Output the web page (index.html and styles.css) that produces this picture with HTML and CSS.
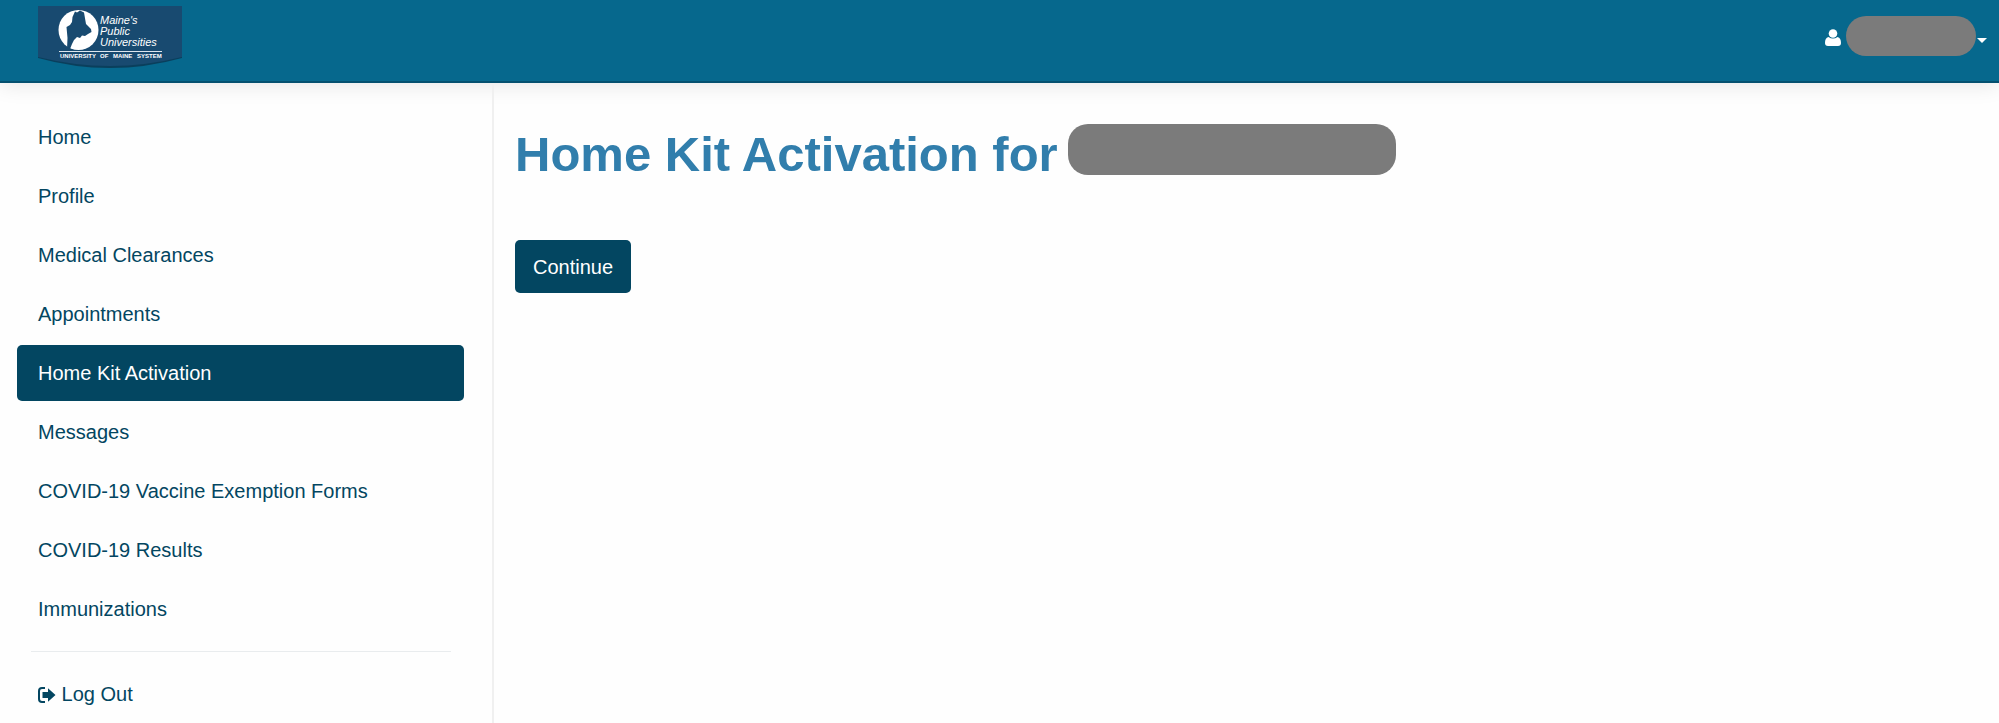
FILE: index.html
```html
<!DOCTYPE html>
<html lang="en">

<head>
    <meta charset="UTF-8">
    <meta name="viewport" content="width=device-width, initial-scale=1.0">
    <title>Home Kit Activation</title>
    <link rel="stylesheet" href="styles.css">
</head>

<body>
    <header class="navbar">
        <a class="brand" href="#" aria-label="University of Maine System">
            <svg class="logo" width="144" height="62" viewBox="0 0 144 62">
                <path class="logo-shadow" d="M0 52 Q72 72 144 52 V50 H0z"/>
                <path class="logo-bg" d="M0 0H144V51Q72 69 0 51z"/>
                <circle class="logo-fg" cx="40.5" cy="24" r="20"/>
                <path class="logo-bg" d="M29 43 L29.500 32 28.500 21 32 19 34 16 34.500 11 37 5.500 39 6.500 42 4.500 46 6.500 48 18 50 20 53 23 53.500 26 50 28 47 30 44 29.500 42 32 39 31 36 34 34 38 32 43z"/>
                <g class="logo-name">
                    <text x="62" y="18">Maine's</text>
                    <text x="62" y="29">Public</text>
                    <text x="62" y="40">Universities</text>
                </g>
                <path class="logo-line" d="M21 45.5H124"/>
                <text class="logo-system" y="52"><tspan x="22">UNIVERSITY</tspan> <tspan x="62">OF</tspan> <tspan x="75">MAINE</tspan> <tspan x="99">SYSTEM</tspan></text>
            </svg>
        </a>
        <button class="user-menu" type="button" aria-label="User menu">
            <svg class="user-icon" width="16" height="18" viewBox="0 0 16 18">
                <path d="M3.5 8C1 8.500 0 10.500 0 14Q0 17 3 17H13Q16 17 16 14C16 10.500 15 8.500 12.500 8Q8 11 3.500 8z"/>
                <circle cx="8" cy="4.500" r="4.300"/>
            </svg>
            <span class="user-name"></span>
            <span class="caret"></span>
        </button>
    </header>

    <div class="page">
        <nav class="sidebar">
            <a href="#">Home</a>
            <a href="#">Profile</a>
            <a href="#">Medical Clearances</a>
            <a href="#">Appointments</a>
            <a class="active" href="#">Home Kit Activation</a>
            <a href="#">Messages</a>
            <a href="#">COVID-19 Vaccine Exemption Forms</a>
            <a href="#">COVID-19 Results</a>
            <a href="#">Immunizations</a>
            <hr>
            <a href="#">
                <svg class="logout-icon" width="18" height="16" viewBox="0 0 18 16">
                    <path class="door" d="M7 1H4Q1 1 1 4V12Q1 15 4 15H7"/>
                    <path d="M4.500 5H10V1.200L17.500 8 10 14.800V11H4.500z"/>
                </svg>
                Log Out
            </a>
        </nav>

        <main class="content">
            <h1>Home Kit Activation for <span class="patient-name"></span></h1>
            <button class="btn" type="button">Continue</button>
        </main>
    </div>
</body>

</html>
```

FILE: styles.css
```css
* {
    box-sizing: border-box;
}

body {
    display: flex;
    flex-direction: column;
    min-height: 100vh;
    margin: 0;
    font-family: "Helvetica Neue", "Liberation Sans", Arial, sans-serif;
    font-size: 20px;
    line-height: 28px;
    color: #034661;
    background-color: #fefefe;
}

.navbar {
    display: flex;
    justify-content: space-between;
    height: 83px;
    padding: 6px 12px 0 38px;
    background-color: #06688d;
    border-bottom: 2px solid #04506f;
    box-shadow: 0 2px 20px rgba(0, 0, 0, 0.1);
}

.logo {
    display: block;
}

.logo-bg {
    fill: #184a70;
}

.logo-shadow {
    fill: #0a3f5c;
}

.logo-fg,
.logo-name,
.logo-system {
    fill: #fff;
}

.logo-name {
    font-size: 11px;
    font-style: italic;
}

.logo-system {
    font-size: 6px;
    font-weight: bold;
}

.logo-line {
    stroke: #dde6ee;
}

.user-menu {
    display: flex;
    align-items: center;
    height: 40px;
    margin-top: 10px;
    padding: 0;
    border: none;
    background: none;
    cursor: pointer;
}

.user-icon {
    fill: #fff;
    margin: 4px 5px 0 0;
}

.user-name {
    width: 130px;
    height: 40px;
    border-radius: 20px;
    background-color: #7b7b7b;
}

.caret {
    margin: 8px 0 0 1px;
    border-top: 5px solid #fff;
    border-left: 5px solid transparent;
    border-right: 5px solid transparent;
}

.page {
    display: flex;
    flex: 1;
}

.sidebar {
    display: flex;
    flex-direction: column;
    gap: 3px;
    width: 494px;
    padding: 26px 28px 0 17px;
    border-right: 2px solid #f0f0f0;
}

.sidebar a {
    padding: 14px 21px;
    border-radius: 5px;
    color: #034661;
    text-decoration: none;
}

.sidebar .active {
    color: #fff;
    background-color: #034661;
}

.sidebar hr {
    width: 420px;
    margin: 11px 14px;
    border: none;
    border-top: 1px solid #e9ecee;
}

.logout-icon {
    fill: #034661;
    vertical-align: -2px;
}

.logout-icon .door {
    fill: none;
    stroke: #034661;
    stroke-width: 2;
}

.content {
    flex: 1;
    padding: 41px 21px;
}

h1 {
    display: flex;
    align-items: flex-start;
    gap: 10px;
    margin: 0 0 56px;
    font-size: 49px;
    font-weight: bold;
    line-height: 60px;
    color: #317eac;
}

.patient-name {
    width: 328px;
    height: 51px;
    border-radius: 20px;
    background-color: #7b7b7b;
}

.btn {
    height: 53px;
    padding: 0 18px;
    border: none;
    border-radius: 5px;
    font: inherit;
    color: #fff;
    background-color: #034661;
    cursor: pointer;
}
```
